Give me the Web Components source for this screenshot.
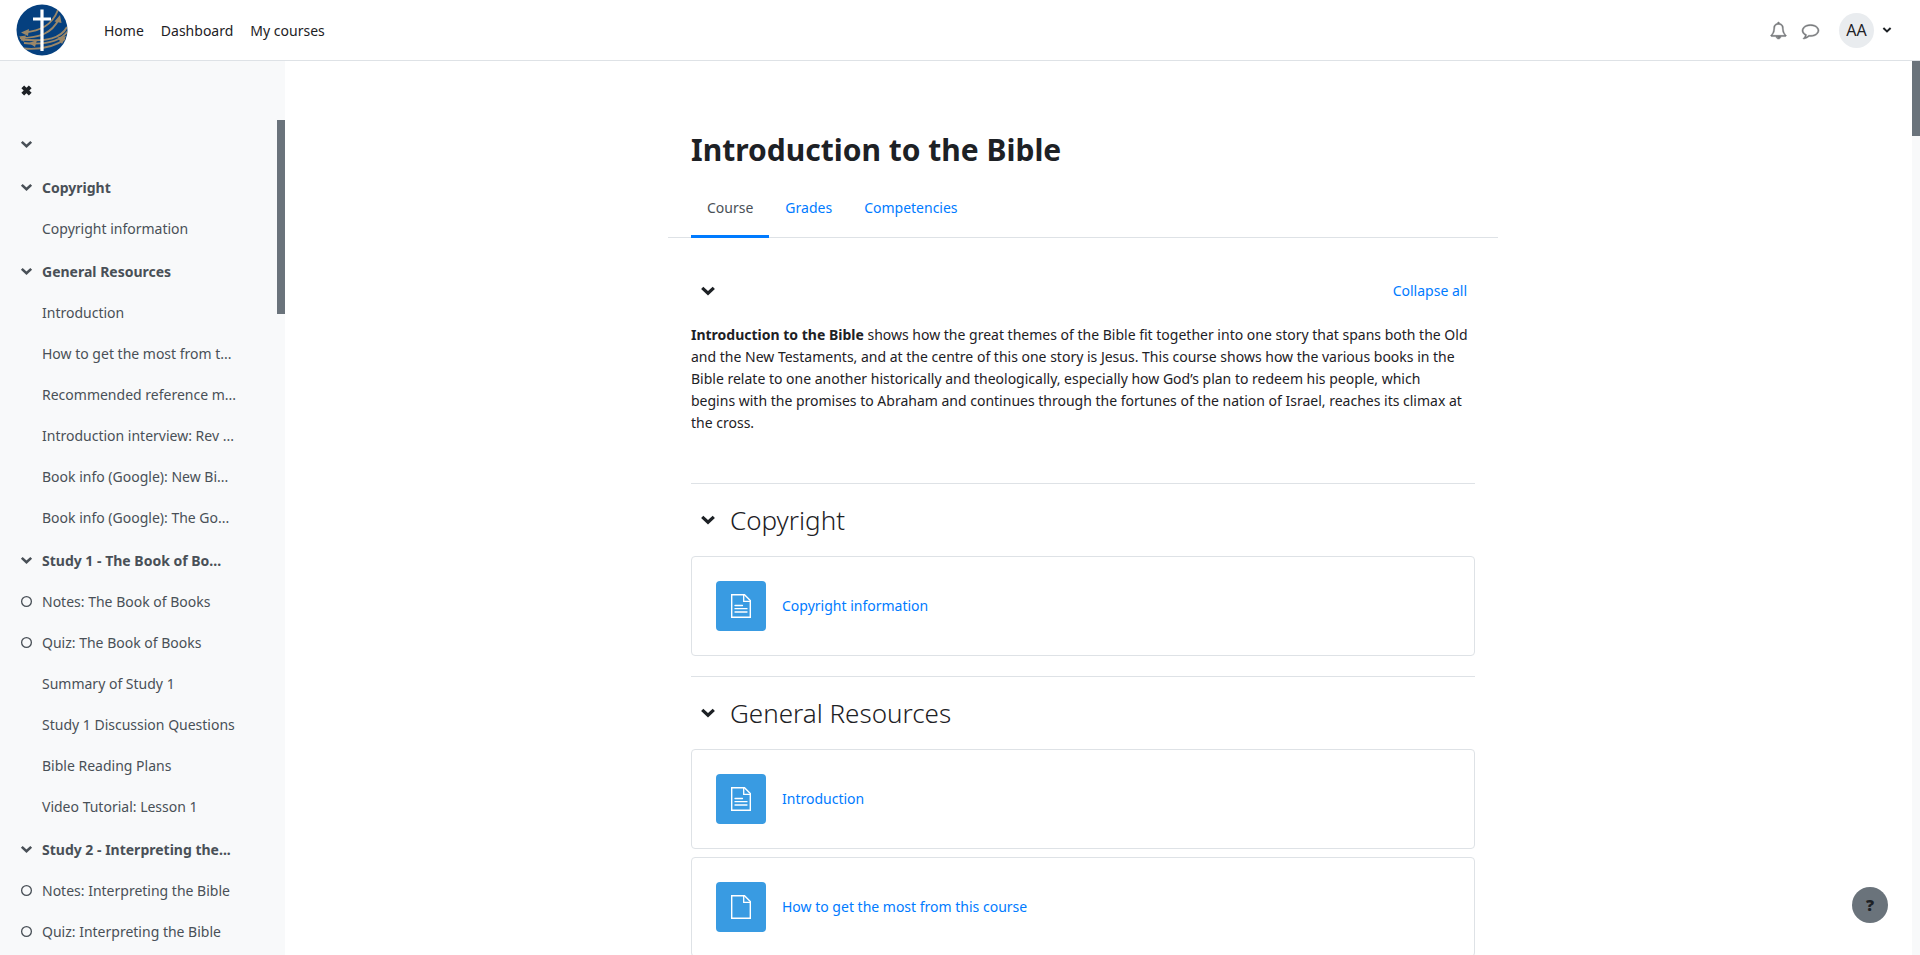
<!DOCTYPE html>
<html lang="en">
<head>
<meta charset="utf-8">
<title>Introduction to the Bible</title>
<style>
  html, body { margin: 0; height: 100%; }
  body {
    font: 14px/22px "Noto Sans", "Open Sans", sans-serif;
    color: #1d2125; background: #fff; overflow: hidden;
  }
</style>
</head>
<body>
<course-page></course-page>
<script>
const define = (name, html, setup) => {
  const template = document.createElement('template');
  template.innerHTML = html;
  customElements.define(name, class extends HTMLElement {
    connectedCallback() {
      if (this.shadowRoot) return;
      const root = this.attachShadow({ mode: 'open' });
      root.append(template.content.cloneNode(true));
      if (setup) setup(root, this);
    }
  });
};

const GLYPHS = {
  chevron: '<path d="M2.2 4.8 8 10.2 13.8 4.8" fill="none" stroke="currentColor" stroke-width="3.2"/>',
  close: '<path d="M3.4 3.4 12.6 12.6M12.6 3.4 3.4 12.6" fill="none" stroke="currentColor" stroke-width="4.8"/>',
  circle: '<circle cx="8" cy="8" r="6" fill="none" stroke="currentColor" stroke-width="1.6"/>',
  bell: '<g transform="scale(.0089286)"><path fill="currentColor" stroke="currentColor" stroke-width="50" d="M912 1696q0-16-16-16-59 0-101.500-42.500t-42.500-101.500q0-16-16-16t-16 16q0 73 51.500 124.500t124.500 51.500q16 0 16-16zm-666-288h1300q-266-300-266-832 0-51-24-105t-69-103-121.500-80.500-169.500-31.500-169.500 31.500-121.500 80.500-69 103-24 105q0 532-266 832zm1482 0q0 52-38 90t-90 38h-448q0 106-75 181t-181 75-181-75-75-181h-448q-52 0-90-38t-38-90q50-42 91-88t85-119.500 74.500-158.500 50-206 19.500-260q0-152 117-282.500t307-158.500q-8-19-8-39 0-40 28-68t68-28 68 28 28 68q0 20-8 39 190 28 307 158.500t117 282.500q0 139 19.500 260t50 206 74.500 158.500 85 119.500 91 88z"/></g>',
  comment: '<g transform="scale(.0089286)"><path fill="currentColor" stroke="currentColor" stroke-width="50" d="M896 384q-204 0-381.500 69.500t-282 187.500-104.500 255q0 112 71.500 213.500t201.500 175.500l87 50-27 96q-24 91-70 172 152-63 275-171l43-38 57 6q69 8 130 8 204 0 381.500-69.500t282-187.500 104.500-255-104.500-255-282-187.500-381.500-69.500zm896 512q0 174-120 321.500t-326 233-450 85.500q-70 0-145-8-198 175-460 242-49 14-114 22h-5q-15 0-27-10.500t-16-27.500v-1q-3-4-.5-12t2-10 4.500-9.500l6-9 7-8.500 8-9q7-8 31-34.500t34.500-38 31-39.500 32.500-51 27-59 26-76q-157-89-247.500-220t-90.500-281q0-174 120-321.500t326-233 450-85.500 450 85.500 326 233 120 321.500z"/></g>'
};

/* A square icon, drawn in the text colour; its size is --size. */
define('ui-icon', `
  <style>
    :host { display: block; flex: none; width: var(--size, 16px); height: var(--size, 16px); }
    svg { display: block; width: 100%; height: 100%; overflow: visible; }
  </style>
  <svg viewBox="0 0 16 16" aria-hidden="true"></svg>`,
  (root, host) => { root.querySelector('svg').innerHTML = GLYPHS[host.getAttribute('name')]; });

/* Thin scroll rail with a thumb at its top. */
define('scroll-rail', `
  <style>
    :host { display: block; flex: none; width: 8px; background: #f8f9fa; }
    div { height: var(--thumb); background: #6a737b; }
  </style>
  <div></div>`);

define('site-logo', `
  <style>:host, svg { display: block; width: 52px; height: 52px; }</style>
  <svg viewBox="0 0 52 52" role="img" aria-label="Site logo">
    <defs><clipPath id="disc"><circle cx="26" cy="26" r="25.500"/></clipPath></defs>
    <circle cx="26" cy="26" r="25.500" fill="#05407f"/>
    <g clip-path="url(#disc)" fill="none" stroke="#9b8768" stroke-width="1.900">
      <path d="M42 6C36 21 25 27 8 28.500"/>
      <path d="M4 34C24 34 36 29 43 15"/>
      <path d="M51 23C45 34 32 38 5 35.500"/>
      <path d="M52 27C44 38 28 41 8 39"/>
      <path d="M7 44.500C26 46 40 42 49 35"/>
    </g>
    <g fill="#9b8768">
      <path d="M5 28.500 13 25 12 32zM3 32.500 10 31.500 8 38zM13 39 21 36 19 43zM44 11 38.500 17.500 45.500 19zM50 32 41.500 33.500 46 40z"/>
    </g>
    <path d="M26 5.500V47M17 15H35" fill="none" stroke="#fff" stroke-width="3.200"/>
  </svg>`);

define('site-header', `
  <style>
    :host { display: flex; flex: none; align-items: center; height: 60px; padding: 0 28px 0 16px;
            border-bottom: 1px solid #dee2e6; background: #fff; }
    nav { display: flex; gap: 17px; margin: 0 auto 0 36px; padding-top: 1px; }
    a { color: inherit; text-decoration: none; }
    button { display: flex; align-items: center; border: 0; padding: 0; background: none; color: #77797c; font: inherit; }
    .tools { display: flex; align-items: center; gap: 15px; --size: 17px; }
    .user { gap: 8px; margin-left: 5px; color: #1d2125; --size: 10px; }
    .avatar { width: 35px; border-radius: 50%; background: #e9ecef; font-size: 16px; line-height: 35px; }
  </style>
  <site-logo></site-logo>
  <nav aria-label="Site"><a href="#home">Home</a><a href="#dashboard">Dashboard</a><a href="#courses">My courses</a></nav>
  <div class="tools">
    <button aria-label="Notifications"><ui-icon name="bell"></ui-icon></button>
    <button aria-label="Messages"><ui-icon name="comment"></ui-icon></button>
    <button class="user" aria-label="User menu"><span class="avatar">AA</span><ui-icon name="chevron"></ui-icon></button>
  </div>`);

/* One line of the course index; "section" makes it a heading, "todo" gives it a completion ring. */
define('index-row', `
  <style>
    :host { display: grid; grid-template-columns: 13px 1fr; column-gap: 9px; align-items: center;
            height: 41px; --size: 13px; color: #495057; }
    :host([section]) { font-weight: 700; }
    a { grid-column: 2; color: inherit; text-decoration: none; white-space: nowrap; }
    button { grid-column: 1; border: 0; padding: 0; background: none; color: inherit; }
    ui-icon { grid-column: 1; }
  </style>
  <a href="#item"><slot></slot></a>`,
  (root, host) => {
    const icon = document.createElement('ui-icon');
    icon.setAttribute('name', host.hasAttribute('todo') ? 'circle' : 'chevron');
    if (host.hasAttribute('todo')) root.querySelector('a').before(icon);
    if (host.hasAttribute('section')) {
      const button = document.createElement('button');
      button.setAttribute('aria-label', 'Collapse section');
      button.append(icon);
      root.querySelector('a').before(button);
    }
  });

define('course-index', `
  <style>
    :host { display: flex; flex-direction: column; flex: none; width: 285px; background: #f8f9fa; }
    .close { display: flex; align-items: center; height: 59px; padding-left: 20px; flex: none; }
    .close button { border: 0; padding: 0; background: none; color: #1d2125; --size: 13px; }
    .body { display: flex; flex: 1; min-height: 0; justify-content: space-between; overflow: hidden; }
    nav { display: flex; flex-direction: column; gap: 2px; padding: 4px 0 0 20px; }
    section { flex: none; }
    scroll-rail { --thumb: 194px; }
  </style>
  <div class="close"><button aria-label="Close course index"><ui-icon name="close"></ui-icon></button></div>
  <div class="body">
    <nav aria-label="Course index">
      <section><index-row section></index-row></section>
      <section>
        <index-row section>Copyright</index-row>
        <index-row>Copyright information</index-row>
      </section>
      <section>
        <index-row section>General Resources</index-row>
        <index-row>Introduction</index-row>
        <index-row>How to get the most from t...</index-row>
        <index-row>Recommended reference m...</index-row>
        <index-row>Introduction interview: Rev ...</index-row>
        <index-row>Book info (Google): New Bi...</index-row>
        <index-row>Book info (Google): The Go...</index-row>
      </section>
      <section>
        <index-row section>Study 1 - The Book of Bo...</index-row>
        <index-row todo>Notes: The Book of Books</index-row>
        <index-row todo>Quiz: The Book of Books</index-row>
        <index-row>Summary of Study 1</index-row>
        <index-row>Study 1 Discussion Questions</index-row>
        <index-row>Bible Reading Plans</index-row>
        <index-row>Video Tutorial: Lesson 1</index-row>
      </section>
      <section>
        <index-row section>Study 2 - Interpreting the...</index-row>
        <index-row todo>Notes: Interpreting the Bible</index-row>
        <index-row todo>Quiz: Interpreting the Bible</index-row>
      </section>
    </nav>
    <scroll-rail></scroll-rail>
  </div>`);

define('course-tabs', `
  <style>
    :host { display: flex; padding: 0 23px; border-bottom: 1px solid #dee2e6; }
    a { padding: 17px 16px 16px; margin-bottom: -1px; border-bottom: 3px solid transparent;
        color: #007bff; text-decoration: none; }
    a[aria-current] { color: #495057; border-color: #007bff; }
  </style>
  <a href="#course" aria-current="page">Course</a><a href="#grades">Grades</a><a href="#competencies">Competencies</a>`);

define('activity-card', `
  <style>
    :host { display: flex; align-items: center; gap: 16px; height: 50px; padding: 24px;
            border: 1px solid #dee2e6; border-radius: 4px; }
    .icon { display: grid; place-items: center; width: 50px; height: 50px; border-radius: 4px; background: #399be2; }
    svg { width: 24px; height: 24px; }
    a { color: #007bff; text-decoration: none; }
    :host(:not([lines])) .lines { display: none; }
  </style>
  <span class="icon"><svg viewBox="0 0 24 24" fill="none" stroke="#fff" aria-hidden="true">
    <path d="M2.700 .700H15.500L21.300 6.500V23.300H2.700Z" stroke-width="1.400"/>
    <path d="M14.700 1V7.300H21" stroke-width="1.300"/>
    <path class="lines" d="M6 11.500H13.500M6 14.700H18M6 18H18" stroke-width="1.300" stroke-linecap="round"/>
  </svg></span>
  <a href="#activity"><slot></slot></a>`);

define('course-section', `
  <style>
    :host { display: block; border-top: 1px solid #dee2e6; padding: 20px 0; }
    header { display: flex; align-items: center; gap: 14px; height: 32px; padding-left: 9px; margin-bottom: 20px; }
    button { border: 0; padding: 0; background: none; color: #1d2125; }
    h2 { margin: 0; font: 300 26px/32px "Noto Sans", "Open Sans", sans-serif; }
    .cards { display: flex; flex-direction: column; gap: 8px; }
  </style>
  <header><button aria-label="Collapse section"><ui-icon name="chevron"></ui-icon></button><h2><slot name="title"></slot></h2></header>
  <div class="cards"><slot></slot></div>`);

define('course-intro', `
  <style>
    :host { display: block; padding-bottom: 49px; }
    header { display: flex; align-items: center; justify-content: space-between; height: 22px; padding: 0 8px 0 9px; margin-bottom: 22px; }
    button { border: 0; padding: 0; background: none; color: #1d2125; }
    a { color: #007bff; text-decoration: none; }
    p { margin: 0; }
  </style>
  <header><button aria-label="Collapse section"><ui-icon name="chevron"></ui-icon></button><a href="#collapse">Collapse all</a></header>
  <p><slot></slot></p>`);

define('course-page', `
  <style>
    :host { display: flex; flex-direction: column; height: 100vh; }
    .shell { display: flex; flex: 1; min-height: 0; }
    main { flex: 1; overflow: hidden; padding: 0 31px 0 0; }
    .column { max-width: 830px; margin: 0 auto; padding-top: 66px; }
    h1 { margin: 0 23px 7px; font-size: 30px; line-height: 46px; font-weight: 700; }
    .content { padding: 42px 23px 0; }
    scroll-rail { --thumb: 75px; }
    .help { position: fixed; right: 32px; bottom: 32px; width: 36px; height: 36px; border: 0; border-radius: 50%;
            padding: 0; background: #6a737b; color: #1d2125; font: 800 16px/36px "Open Sans", sans-serif; }
  </style>
  <site-header></site-header>
  <div class="shell">
    <course-index></course-index>
    <main>
      <div class="column">
        <h1>Introduction to the Bible</h1>
        <course-tabs></course-tabs>
        <div class="content">
          <course-intro><strong>Introduction to the Bible</strong> shows how the great themes of the Bible fit together into one story that spans both the Old and the New Testaments, and at the centre of this one story is Jesus. This course shows how the various books in the Bible relate to one another historically and theologically, especially how God’s plan to redeem his people, which<br>begins with the promises to Abraham and continues through the fortunes of the nation of Israel, reaches its climax at the cross.</course-intro>
          <course-section>
            <span slot="title">Copyright</span>
            <activity-card lines>Copyright information</activity-card>
          </course-section>
          <course-section>
            <span slot="title">General Resources</span>
            <activity-card lines>Introduction</activity-card>
            <activity-card>How to get the most from this course</activity-card>
          </course-section>
        </div>
      </div>
    </main>
    <scroll-rail></scroll-rail>
  </div>
  <button class="help" aria-label="Help">?</button>`);
</script>
</body>
</html>
